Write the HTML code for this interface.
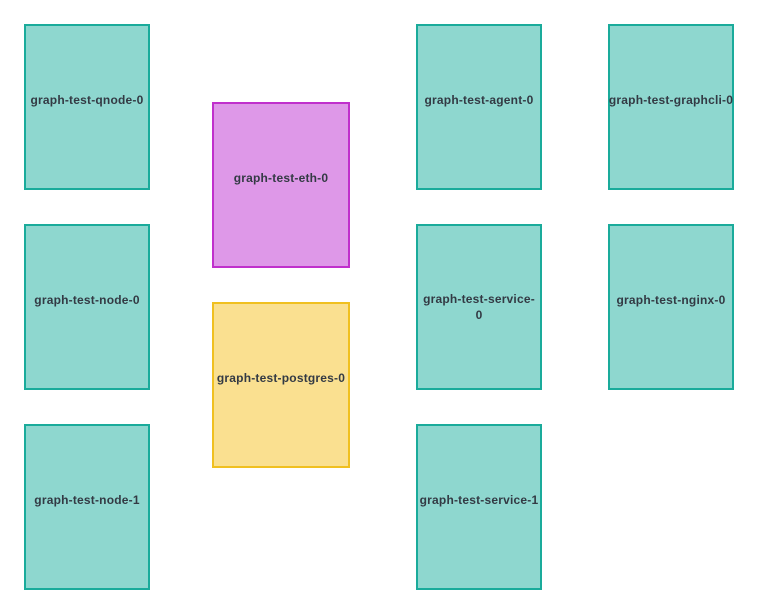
<!DOCTYPE html>
<html><head><style>
body{margin:0;width:760px;height:614px;background:#fff;position:relative;overflow:hidden;font-family:"Liberation Sans",sans-serif;}
.b{position:absolute;box-sizing:border-box;border:2px solid #1aab9b;background:#8ed7cf;display:flex;align-items:center;justify-content:center;text-align:center;font-weight:bold;font-size:12px;color:#333a44;line-height:16px;letter-spacing:0.2px;white-space:normal;padding-bottom:14px;}
.t{width:126px;height:166px;}
.p{background:#de98e8;border-color:#c030cc;width:138px;height:166px;}
.y{background:#fae090;border-color:#f0c020;width:138px;height:166px;}
</style></head><body>
<div class="b t" style="left:24px;top:24px">graph-test-qnode-0</div>
<div class="b t" style="left:24px;top:224px">graph-test-node-0</div>
<div class="b t" style="left:24px;top:424px">graph-test-node-1</div>
<div class="b p" style="left:212px;top:102px">graph-test-eth-0</div>
<div class="b y" style="left:212px;top:302px;white-space:nowrap">graph-test-postgres-0</div>
<div class="b t" style="left:416px;top:24px">graph-test-agent-0</div>
<div class="b t" style="left:416px;top:224px;padding-bottom:0"><span style="width:118px">graph-test-service-<br>0</span></div>
<div class="b t" style="left:416px;top:424px;white-space:nowrap">graph-test-service-1</div>
<div class="b t" style="left:608px;top:24px;white-space:nowrap">graph-test-graphcli-0</div>
<div class="b t" style="left:608px;top:224px">graph-test-nginx-0</div>
</body></html>
